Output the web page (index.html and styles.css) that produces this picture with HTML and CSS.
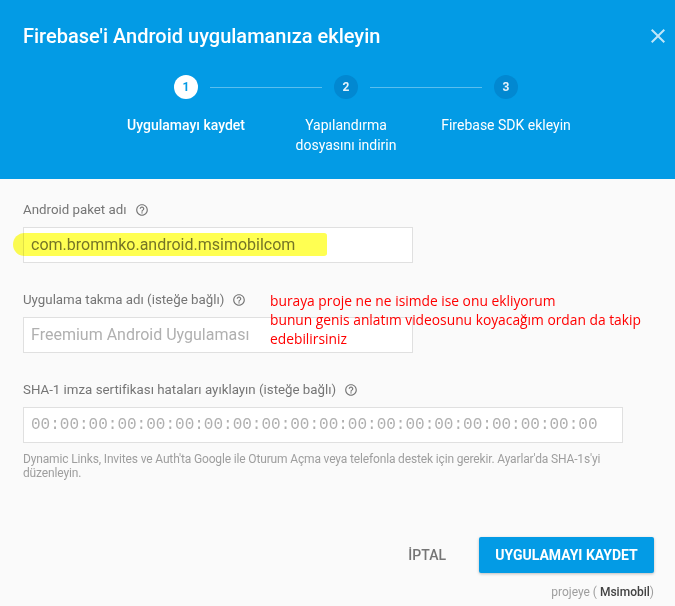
FILE: index.html
```html
<!DOCTYPE html>
<html lang="tr">
<head>
<meta charset="utf-8">
<title>Firebase'i Android uygulamanıza ekleyin</title>
<link rel="stylesheet" href="styles.css">
</head>
<body>
<div class="dialog">
  <header class="header">
    <div class="title-row">
      <h1 class="title">Firebase'i Android uygulamanıza ekleyin</h1>
      <button class="close" aria-label="Kapat">
        <svg viewBox="0 0 24 24" width="24" height="24"><path d="M19 6.41 17.59 5 12 10.59 6.41 5 5 6.41 10.59 12 5 17.59 6.41 19 12 13.41 17.59 19 19 17.59 13.41 12z" fill="currentColor"/></svg>
      </button>
    </div>
    <div class="stepper">
      <div class="step-dots">
        <span class="dot active">1</span>
        <span class="connector"></span>
        <span class="dot">2</span>
        <span class="connector"></span>
        <span class="dot">3</span>
      </div>
      <div class="step-labels">
        <span class="step-label active">Uygulamayı kaydet</span>
        <span class="step-label">Yapılandırma<br>dosyasını indirin</span>
        <span class="step-label">Firebase SDK ekleyin</span>
      </div>
    </div>
  </header>

  <main class="body">
    <div class="field">
      <label class="label">Android paket adı <svg class="help" viewBox="0 0 24 24"><path d="M11 18h2v-2h-2v2zm1-16C6.48 2 2 6.48 2 12s4.48 10 10 10 10-4.48 10-10S17.52 2 12 2zm0 18c-4.41 0-8-3.59-8-8s3.59-8 8-8 8 3.59 8 8-3.59 8-8 8zm0-14c-2.21 0-4 1.79-4 4h2c0-1.1.9-2 2-2s2 .9 2 2c0 2-3 1.75-3 5h2c0-2.25 3-2.5 3-5 0-2.21-1.79-4-4-4z" fill="currentColor"/></svg></label>
      <div class="input">com.brommko.android.msimobilcom</div>
      <span class="marker"></span>
    </div>

    <div class="field">
      <label class="label">Uygulama takma adı (isteğe bağlı) <svg class="help" viewBox="0 0 24 24"><path d="M11 18h2v-2h-2v2zm1-16C6.48 2 2 6.48 2 12s4.48 10 10 10 10-4.48 10-10S17.52 2 12 2zm0 18c-4.41 0-8-3.59-8-8s3.59-8 8-8 8 3.59 8 8-3.59 8-8 8zm0-14c-2.21 0-4 1.79-4 4h2c0-1.1.9-2 2-2s2 .9 2 2c0 2-3 1.75-3 5h2c0-2.25 3-2.5 3-5 0-2.21-1.79-4-4-4z" fill="currentColor"/></svg></label>
      <div class="input placeholder">Freemium Android Uygulaması</div>
      <p class="note">buraya proje ne ne isimde ise onu ekliyorum<br>bunun genis anlatım videosunu koyacağım ordan da takip<br>edebilirsiniz</p>
    </div>

    <div class="field">
      <label class="label">SHA-1 imza sertifikası hataları ayıklayın (isteğe bağlı) <svg class="help" viewBox="0 0 24 24"><path d="M11 18h2v-2h-2v2zm1-16C6.48 2 2 6.48 2 12s4.48 10 10 10 10-4.48 10-10S17.52 2 12 2zm0 18c-4.41 0-8-3.59-8-8s3.59-8 8-8 8 3.59 8 8-3.59 8-8 8zm0-14c-2.21 0-4 1.79-4 4h2c0-1.1.9-2 2-2s2 .9 2 2c0 2-3 1.75-3 5h2c0-2.25 3-2.5 3-5 0-2.21-1.79-4-4-4z" fill="currentColor"/></svg></label>
      <div class="input wide placeholder mono">00:00:00:00:00:00:00:00:00:00:00:00:00:00:00:00:00:00:00:00</div>
      <p class="hint">Dynamic Links, Invites ve Auth'ta Google ile Oturum Açma veya telefonla destek için gerekir. Ayarlar'da SHA-1s'yi düzenleyin.</p>
    </div>

    <div class="actions">
      <button class="btn flat">İPTAL</button>
      <button class="btn raised">UYGULAMAYI KAYDET</button>
    </div>
    <div class="project">projeye ( <b>Msimobil</b>)</div>
  </main>
</div>
</body>
</html>
```

FILE: styles.css
```css
* { box-sizing: border-box; }

html, body {
  margin: 0;
  padding: 0;
  background: #fafafa;
  font-family: Roboto, "Noto Sans", Arial, sans-serif;
}

.dialog {
  width: 675px;
  height: 606px;
  display: flex;
  flex-direction: column;
  background: #fafafa;
  overflow: hidden;
}

/* Blue top band with title and stepper */
.header {
  background: #039be5;
  height: 179px;
  padding: 22px 0 0 23px;
  color: #fff;
}

.title-row {
  display: flex;
  align-items: center;
  justify-content: space-between;
  height: 28px;
}

.title {
  margin: 0;
  font-size: 20px;
  font-weight: 500;
  line-height: 28px;
}

.close {
  border: 0;
  background: none;
  padding: 0;
  margin-right: 5px;
  width: 24px;
  height: 24px;
  color: rgba(255, 255, 255, 0.75);
  display: flex;
}

.stepper {
  margin-top: 25px;
  margin-left: 83px;
  width: 480px;
}

.step-dots {
  display: flex;
  align-items: center;
  padding: 0 68px;
  height: 24px;
}

.dot {
  width: 24px;
  height: 24px;
  flex: none;
  border-radius: 50%;
  background: #0288d1;
  color: rgba(255, 255, 255, 0.9);
  font-size: 12px;
  font-weight: 700;
  display: flex;
  align-items: center;
  justify-content: center;
}

.dot.active {
  background: #fff;
  color: #039be5;
}

.connector {
  flex: 1;
  height: 1px;
  margin: 0 12px;
  background: rgba(255, 255, 255, 0.35);
}

.step-labels {
  display: grid;
  grid-template-columns: repeat(3, 160px);
  margin-top: 16px;
}

.step-label {
  text-align: center;
  font-size: 14px;
  line-height: 20px;
  color: #fff;
}

.step-label.active {
  font-weight: 500;
}

/* Form area */
.body {
  flex: 1;
  padding: 22px 21px 0 23px;
  display: flex;
  flex-direction: column;
  position: relative;
}

.field {
  position: relative;
  display: flex;
  flex-direction: column;
  margin-bottom: 28px;
}

.label {
  display: flex;
  align-items: center;
  gap: 8px;
  font-size: 13.3px;
  line-height: 18px;
  color: #757575;
  margin-bottom: 8px;
}

.help {
  width: 14px;
  height: 14px;
  color: #757575;
}

.input {
  width: 390px;
  height: 36px;
  background: #fff;
  border: 1px solid #e0e0e0;
  padding: 0 7px;
  font-size: 16px;
  line-height: 34px;
  color: #757575;
  white-space: nowrap;
  overflow: hidden;
}

.input.wide {
  width: 600px;
}

.placeholder {
  color: #b0b0b0;
}

.mono {
  font-family: "Liberation Mono", "DejaVu Sans Mono", monospace;
  font-size: 16px;
}

/* yellow marker stroke drawn across the package name */
.marker {
  position: absolute;
  left: -10px;
  top: 32px;
  width: 314px;
  height: 23px;
  background: #ffff33;
  opacity: 0.85;
  mix-blend-mode: multiply;
  border-radius: 12px 3px 3px 12px;
}

/* red annotation written over the form */
.note {
  position: absolute;
  left: 247px;
  top: 0;
  margin: 0;
  font-family: "Open Sans", "Noto Sans", sans-serif;
  font-size: 13.8px;
  line-height: 19px;
  color: #ff0000;
  white-space: nowrap;
}

.hint {
  margin: 9px 0 0;
  width: 600px;
  font-size: 12px;
  line-height: 14px;
  letter-spacing: -0.15px;
  color: #9e9e9e;
}

.actions {
  display: flex;
  justify-content: flex-end;
  align-items: center;
  gap: 16px;
  margin-top: 29px;
}

.btn {
  font-family: inherit;
  font-size: 14px;
  font-weight: 500;
  border: 0;
  height: 36px;
  padding: 0 16px;
  border-radius: 2px;
  white-space: nowrap;
  cursor: pointer;
}

.btn.flat {
  background: none;
  color: #757575;
  padding: 0 17px;
}

.btn.raised {
  width: 175px;
  padding: 0;
  background: #039be5;
  color: #fff;
  font-weight: 700;
  box-shadow: 0 1px 3px rgba(0, 0, 0, 0.25);
}

.project {
  align-self: flex-end;
  margin-top: 12px;
  font-size: 12px;
  color: #9e9e9e;
}

.project b {
  font-weight: 500;
  color: #424242;
}
```
